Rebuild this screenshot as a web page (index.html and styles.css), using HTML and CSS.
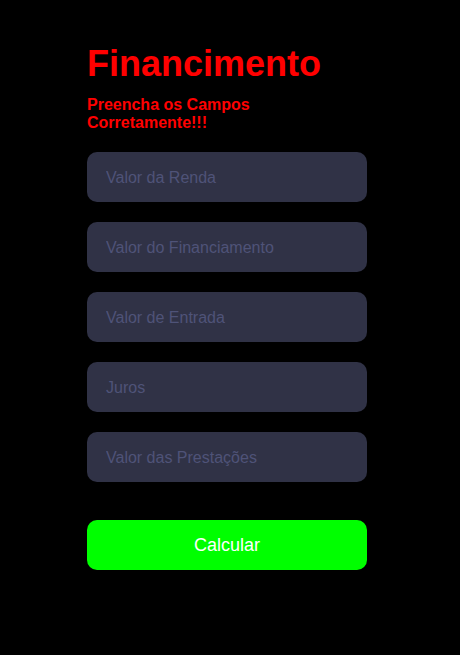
FILE: index.html
```html
<!DOCTYPE html>
<html lang="pt-BR">
<head>
<meta charset="utf-8">
<title>Financimento</title>
<link rel="stylesheet" href="styles.css">
</head>
<body>
<main class="form">
  <h1 class="title">Financimento</h1>
  <p class="subtitle">Preencha os Campos Corretamente!!!</p>
  <div class="fields">
    <input class="field" type="text" placeholder="Valor da Renda">
    <input class="field" type="text" placeholder="Valor do Financiamento">
    <input class="field" type="text" placeholder="Valor de Entrada">
    <input class="field" type="text" placeholder="Juros">
    <input class="field" type="text" placeholder="Valor das Prestações">
  </div>
  <button class="btn" type="button">Calcular</button>
</main>
</body>
</html>
```
FILE: styles.css
```css
html, body {
  margin: 0;
  padding: 0;
  background: #000;
  font-family: "Liberation Sans", Arial, sans-serif;
}
.form {
  width: 280px;
  margin-left: 87px;
  padding-top: 39px;
  display: flex;
  flex-direction: column;
}
.title {
  margin: 0;
  font-size: 36px;
  font-weight: bold;
  color: #ff0000;
  line-height: 50px;
}
.subtitle {
  margin: 7px 0 0;
  font-size: 16px;
  font-weight: bold;
  color: #ff0000;
  line-height: 18px;
}
.fields {
  margin-top: 20px;
  display: flex;
  flex-direction: column;
  gap: 20px;
}
.field {
  box-sizing: border-box;
  width: 280px;
  height: 50px;
  border: none;
  border-radius: 10px;
  background: #303246;
  padding: 2px 19px 0;
  font-family: "Liberation Sans", Arial, sans-serif;
  font-size: 16px;
  color: #fff;
  outline: none;
}
.field::placeholder {
  color: #4f5378;
}
.btn {
  margin-top: 38px;
  width: 280px;
  height: 50px;
  border: none;
  border-radius: 10px;
  background: #00ff00;
  color: #fff;
  font-family: "Liberation Sans", Arial, sans-serif;
  font-size: 18px;
}
```
